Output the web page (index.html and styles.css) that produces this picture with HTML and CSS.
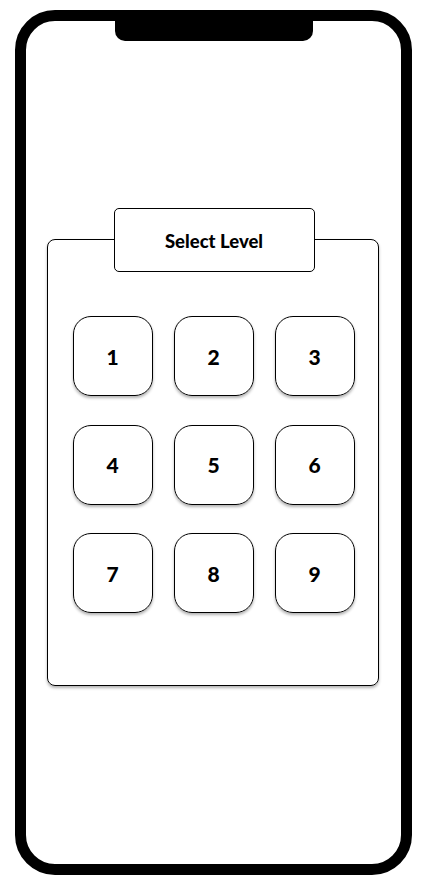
FILE: index.html
```html
<!DOCTYPE html>
<html>
<head>
<meta charset="utf-8">
<link rel="stylesheet" href="styles.css">
</head>
<body>
<div class="phone">
  <div class="screen">
    <div class="notch"></div>
    <div class="panel">
      <div class="title">Select Level</div>
      <div class="card">
        <div class="level">1</div>
        <div class="level">2</div>
        <div class="level">3</div>
        <div class="level">4</div>
        <div class="level">5</div>
        <div class="level">6</div>
        <div class="level">7</div>
        <div class="level">8</div>
        <div class="level">9</div>
      </div>
    </div>
  </div>
</div>
</body>
</html>
```
FILE: styles.css
```css
html, body {
  margin: 0;
  padding: 0;
  background: #fff;
}
body {
  font-family: Lato, "Open Sans", sans-serif;
  color: #000;
}
.phone {
  box-sizing: border-box;
  width: 397px;
  height: 865px;
  margin: 10px 0 0 15px;
  border: 11px solid #000;
  border-radius: 40px;
  background: #fff;
}
.screen {
  display: flex;
  flex-direction: column;
  align-items: center;
}
.notch {
  width: 198px;
  height: 20px;
  background: #000;
  border-radius: 0 0 10px 10px;
}
.panel {
  margin-top: 167px;
  display: flex;
  flex-direction: column;
  align-items: center;
  margin-left: -2px;
}
.title {
  position: relative;
  z-index: 1;
  box-sizing: border-box;
  width: 201px;
  height: 64px;
  border: 1px solid #000;
  border-radius: 5px;
  background: #fff;
  display: flex;
  align-items: center;
  justify-content: center;
  font-weight: 900;
  font-size: 18.5px;
  margin-left: 3px;
  padding-top: 2px;
}
.card {
  box-sizing: border-box;
  width: 332px;
  margin-top: -33px;
  border: 1px solid #000;
  border-radius: 8px;
  box-shadow: 0 2px 3px rgba(0,0,0,0.3);
  padding: 76px 23px 72px 25px;
  display: grid;
  grid-template-columns: repeat(3, 80px);
  column-gap: 21px;
  row-gap: 28.5px;
}
.level {
  box-sizing: border-box;
  width: 80px;
  height: 80px;
  border: 1px solid #000;
  border-radius: 18px;
  box-shadow: 0 2px 3px rgba(0,0,0,0.3);
  display: flex;
  align-items: center;
  justify-content: center;
  font-weight: 900;
  font-size: 21px;
}
```
